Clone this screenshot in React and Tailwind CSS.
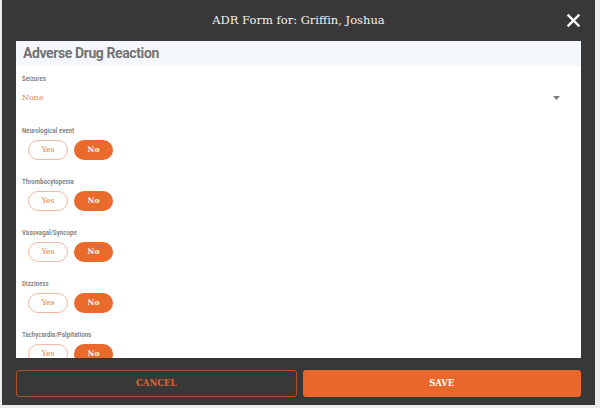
import React from "react";

const slab = { fontFamily: '"DejaVu Serif", "Liberation Serif", serif' };
const roboto = { fontFamily: 'Roboto, "Liberation Sans", sans-serif' };

function YesNo({ label }) {
  return (
    <div className="flex flex-col shrink-0">
      <div className="h-[10px] leading-[10px] text-[7px] font-medium text-[#7a7a7a] font-stretch-condensed" style={roboto}>{label}</div>
      <div className="mt-[4px] flex gap-[6px] pl-[6px]">
        <div className="w-[40px] h-[20px] rounded-full border border-[#f0b9a0] flex items-center justify-center text-[7.5px] text-[#e9753f]" style={slab}>Yes</div>
        <div className="w-[39px] h-[20px] rounded-full bg-[#ea6a2c] flex items-center justify-center text-[7.5px] font-semibold text-white" style={slab}>No</div>
      </div>
    </div>
  );
}

export default function App() {
  const items = ["Neurological event", "Thrombocytopenia", "Vasovagal/Syncope", "Dizziness", "Tachycardia/Palpitations"];
  return (
    <div className="w-[600px] h-[408px] bg-[#ececec] overflow-hidden">
      <div className="ml-[2px] w-[593px] h-[405px] bg-[#383838] flex flex-col">
        <div className="h-[41px] shrink-0 relative flex items-center justify-center">
          <span className="text-[11.5px] text-[#f2f2f2]" style={slab}>ADR Form for: Griffin, Joshua</span>
          <svg className="absolute left-[565px] top-[14px]" width="13" height="13" viewBox="0 0 13 13">
            <path d="M1.5 1.5 L11.5 11.5 M11.5 1.5 L1.5 11.5" stroke="#ffffff" strokeWidth="2.4" strokeLinecap="square" />
          </svg>
        </div>
        <div className="mx-[14px] h-[317px] shrink-0 bg-white overflow-hidden flex flex-col">
          <div className="h-[25px] shrink-0 bg-[#f4f8fd] flex items-center px-[7px]">
            <span className="text-[14px] font-bold text-[#737373] tracking-[-0.4px]" style={roboto}>Adverse Drug Reaction</span>
          </div>
          <div className="px-[6px] pt-[8px] flex flex-col">
            <div className="h-[10px] leading-[10px] text-[7px] font-medium text-[#7a7a7a] font-stretch-condensed" style={roboto}>Seizures</div>
            <div className="mt-[9px] h-[10px] flex items-center justify-between pr-[15px]">
              <span className="text-[8px] text-[#e8845a]" style={slab}>None</span>
              <svg width="7" height="4" viewBox="0 0 7 4"><path d="M0 0 L7 0 L3.5 4 Z" fill="#7a7a7a" /></svg>
            </div>
            <div className="mt-[23px] flex flex-col gap-[17px]">
              {items.map((l) => (
                <YesNo key={l} label={l} />
              ))}
            </div>
          </div>
        </div>
        <div className="mt-[12px] mx-[14px] h-[27px] shrink-0 flex gap-[6px]">
          <div className="flex-1 rounded-[3px] border border-[#a9532c] flex items-center justify-center text-[8.5px] font-semibold text-[#e0662d]" style={slab}>CANCEL</div>
          <div className="flex-1 rounded-[3px] bg-[#e9672a] flex items-center justify-center text-[8.5px] font-semibold text-white" style={slab}>SAVE</div>
        </div>
      </div>
    </div>
  );
}
